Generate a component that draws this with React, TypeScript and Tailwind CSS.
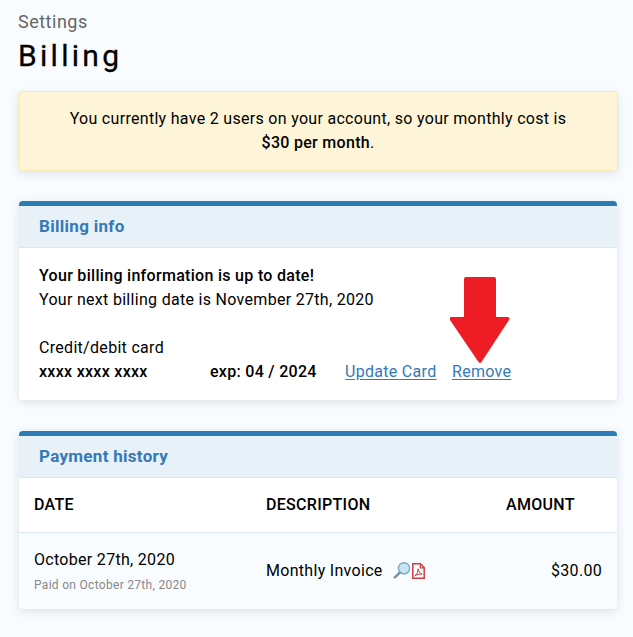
const roboto = "font-['Roboto',sans-serif]";

function CardHeader({ title }: { title: string }) {
  return (
    <div className="h-[42px] flex items-center px-[20px] bg-[#e9f1f8] border-b border-[#dce8f1]">
      <h2 className="text-[17px] font-bold tracking-[0.3px] text-[#337ab7]">{title}</h2>
    </div>
  );
}

function PdfIcon() {
  return (
    <svg width="13" height="16" viewBox="0 0 13 16" fill="none" className="block">
      <path d="M.8.8h7.700l3.700 3.700v10.700H.8z" fill="#fbfcfd" stroke="#cf3b40" strokeWidth="1.500" />
      <path d="M8.300 1v3.800h3.700" stroke="#cf3b40" strokeWidth="1.200" />
      <path d="M2.800 12.800c2-1 3.500-4 3.200-7 .6 3 2 4.800 4.200 5.300-2.700-.2-5.400.4-7.400 1.700z" stroke="#cf3b40" strokeWidth="1" />
    </svg>
  );
}

function SearchIcon() {
  return (
    <svg width="18" height="17" viewBox="0 0 18 17" fill="none" className="block">
      <circle cx="11" cy="6.300" r="5.600" fill="#c8e4f6" stroke="#7fa8c4" strokeWidth="1.400" />
      <path d="M6.800 10.600 1.800 15.400" stroke="#7f8d99" strokeWidth="2.400" strokeLinecap="round" />
    </svg>
  );
}

export default function App() {
  return (
    <div className={`${roboto} relative min-h-[637px] bg-[#f8fcff] text-black pl-[18px] pr-[15px] pt-[10px] text-[16px] tracking-[0.3px]`}>
      <div className="text-[18px] leading-[24px] text-[#666] tracking-[0.5px]">Settings</div>
      <h1 className="mt-[4px] text-[30px] leading-[36px] font-normal tracking-[3.3px] [-webkit-text-stroke:0.3px_black]">Billing</h1>

      <div className="mt-[17px] h-[80px] flex flex-col justify-center text-center leading-[24px] bg-[#fef5d8] border border-[#fbe8b8] rounded-[4px] shadow-[0_3px_10px_rgba(40,60,80,0.12)]">
        <p>You currently have 2 users on your account, so your monthly cost is</p>
        <p>
          <span className="font-medium">$30 per month</span>.
        </p>
      </div>

      <section className="mx-[1px] mt-[30px] h-[199px] bg-white border-t-[5px] border-[#2b7bb5] rounded-[4px] overflow-hidden shadow-[0_2px_8px_rgba(40,60,80,0.15)]">
        <CardHeader title="Billing info" />
        <div className="px-[20px] pt-[16px] leading-[24px]">
          <p className="font-medium">Your billing information is up to date!</p>
          <p>Your next billing date is November 27th, 2020</p>
          <p className="mt-[24px]">Credit/debit card</p>
          <div className="flex items-center">
            <span className="w-[171px] font-medium">xxxx xxxx xxxx</span>
            <span className="w-[135px] font-medium">exp: 04 / 2024</span>
            <a href="#" className="text-[#337ab7] underline underline-offset-2">Update Card</a>
            <a href="#" className="ml-[15.500px] text-[#337ab7] underline underline-offset-2">Remove</a>
          </div>
        </div>
      </section>

      <section className="mx-[1px] mt-[31px] h-[178px] bg-[#f8fcff] border-t-[5px] border-[#2b7bb5] rounded-[4px] overflow-hidden shadow-[0_2px_8px_rgba(40,60,80,0.15)]">
        <CardHeader title="Payment history" />
        <div className="h-[55px] grid grid-cols-[232px_240px_1fr] items-center pl-[15px] bg-white border-b border-[#d7e8f4] font-medium">
          <span>DATE</span>
          <span>DESCRIPTION</span>
          <span>AMOUNT</span>
        </div>
        <div className="h-[76px] pb-[2px] grid grid-cols-[232px_1fr_auto] items-center pl-[15px] pr-[15px]">
          <div>
            <div className="leading-[24px]">October 27th, 2020</div>
            <div className="mt-[5px] text-[12px] leading-[16px] text-[#888]">Paid on October 27th, 2020</div>
          </div>
          <div className="flex items-center mt-[1px]">
            <span>Monthly Invoice</span>
            <span className="ml-[10px]"><SearchIcon /></span>
            <span className="ml-[1px]"><PdfIcon /></span>
          </div>
          <span className="mt-[1px]">$30.00</span>
        </div>
      </section>

      <svg width="60" height="87" viewBox="0 0 60 87" className="absolute left-[450px] top-[277px]">
        <path d="M14 2a2 2 0 0 1 2-2h28a2 2 0 0 1 2 2v38h12a2 2 0 0 1 1 3L31.500 85a2 2 0 0 1-3 0L0 43a2 2 0 0 1 1-3h13z" fill="#ee1c25" />
      </svg>
    </div>
  );
}
